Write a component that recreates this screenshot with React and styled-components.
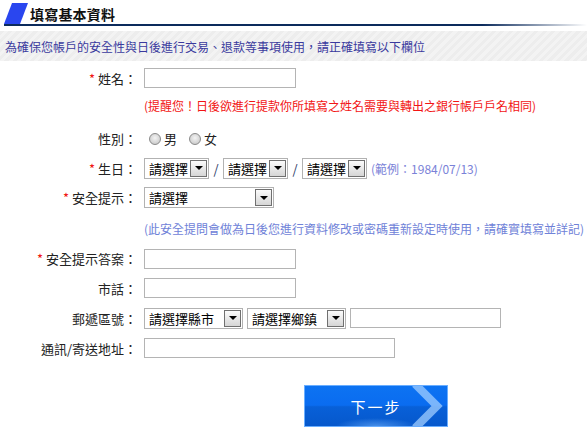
import React from "react";
import styled, { createGlobalStyle } from "styled-components";

const Global = createGlobalStyle`
  html, body { margin: 0; padding: 0; background: #fff; }
  body { font-family: "Noto Sans CJK TC", "Noto Sans", "Liberation Sans", sans-serif; color: #222; }
  * { box-sizing: border-box; }
`;

const Page = styled.div`
  width: 587px;
  height: 438px;
  overflow: hidden;
  background: #fff;
`;

const Header = styled.div`
  display: flex;
  align-items: center;
  height: 24px;
  padding: 3px 0 0 4px;
`;

const Mark = styled.svg`
  width: 24px;
  height: 21px;
  flex: none;
`;

const Title = styled.h1`
  margin: 0 0 0 2px;
  font-size: 14px;
  font-weight: 700;
  line-height: 20px;
  color: #111;
  letter-spacing: 0.2px;
`;

const Rule = styled.div`
  height: 2px;
  margin-left: 4px;
  background: linear-gradient(to right, #0c2b5c 0%, #0c2b5c 82%, #ffffff 100%);
`;

const Intro = styled.div`
  margin-top: 5px;
  height: 30px;
  display: flex;
  align-items: center;
  padding-left: 5px;
  font-size: 12px;
  color: #3a3a9e;
  background: repeating-linear-gradient(135deg, #ededed 0 3px, #f3f3f3 3px 6px);
`;

const Form = styled.div`
  display: flex;
  flex-direction: column;
  padding-top: 2px;
`;

const Row = styled.div`
  display: grid;
  grid-template-columns: 137px auto;
  column-gap: 7px;
  align-items: center;
  height: ${(p) => p.$h || 30}px;
  margin-top: ${(p) => p.$mt || 0}px;
`;

const Label = styled.div`
  text-align: right;
  font-size: 13px;
  color: #222;
  white-space: nowrap;
`;

const Star = styled.span`
  color: #f01010;
  font-size: 13px;
  margin-right: 3px;
`;

const Field = styled.div`
  display: flex;
  align-items: center;
  gap: ${(p) => p.$gap ?? 4}px;
  grid-column: 2;
`;

const TextInput = styled.div`
  width: ${(p) => p.$w}px;
  height: 20px;
  border: 1px solid #b4b4b4;
  background: #fff;
`;

const Select = styled.div`
  width: ${(p) => p.$w}px;
  height: 21px;
  border: 1px solid #b2b2b2;
  background: #fff;
  display: flex;
  align-items: center;
  padding: 1px 1px 1px 4px;
  font-size: 13px;
  color: #000;
`;

const SelText = styled.span`
  flex: 1;
  white-space: nowrap;
  line-height: 17px;
`;

const Arrow = styled.span`
  flex: none;
  width: 17px;
  height: 17px;
  border: 1px solid #707070;
  background: linear-gradient(#fbfbfb, #d6d6d6);
  display: flex;
  align-items: center;
  justify-content: center;
  &::after {
    content: "";
    border-left: 4px solid transparent;
    border-right: 4px solid transparent;
    border-top: 4px solid #000;
  }
`;

const Slash = styled.span`
  width: 6px;
  font-size: 13px;
  color: #2b3a66;
  text-align: center;
`;

const Note = styled.div`
  grid-column: 2;
  font-size: 12px;
  color: ${(p) => p.$color};
  white-space: nowrap;
`;

const Radio = styled.span`
  width: 12px;
  height: 12px;
  border-radius: 50%;
  border: 1px solid #8a8a8a;
  background: radial-gradient(circle at 50% 40%, #f4f4f4 0%, #d0d0d0 70%, #bdbdbd 100%);
  flex: none;
`;

const RadioText = styled.span`
  font-size: 13px;
  margin: 0 ${(p) => p.$mr || 0}px 0 3px;
`;

const ButtonWrap = styled.div`
  margin: 22px 0 0 304px;
`;

const NextButton = styled.button`
  position: relative;
  width: 144px;
  height: 42px;
  padding: 0;
  border: 1px solid #6aaeff;
  background:
    radial-gradient(ellipse 40px 8px at 50% 100%, rgba(120, 185, 255, 0.55), rgba(120, 185, 255, 0) 100%),
    linear-gradient(#0d73f2 0%, #0a6cf0 48%, #0860d8 52%, #0658cc 100%);
  color: #fff;
  font-family: "Noto Sans CJK TC", sans-serif;
  font-size: 15px;
  letter-spacing: 2px;
  overflow: hidden;
  cursor: pointer;
`;

const Chevron = styled.svg`
  position: absolute;
  right: 0;
  top: 0;
  width: 40px;
  height: 40px;
`;

export default function App() {
  return (
    <Page>
      <Global />
      <Header>
        <Mark viewBox="0 0 24 21">
          <polygon points="8,0 24,0 16,21 0,21" fill="#2a46ef" />
        </Mark>
        <Title>填寫基本資料</Title>
      </Header>
      <Rule />
      <Intro>為確保您帳戶的安全性與日後進行交易、退款等事項使用，請正確填寫以下欄位</Intro>
      <Form>
        <Row $h={30}>
          <Label><Star>*</Star>姓名：</Label>
          <Field><TextInput $w={152} /></Field>
        </Row>
        <Row $h={24}>
          <Note $color="#f21414">(提醒您！日後欲進行提款你所填寫之姓名需要與轉出之銀行帳戶戶名相同)</Note>
        </Row>
        <Row $h={29} $mt={7}>
          <Label>性別：</Label>
          <Field $gap={0}>
            <span style={{ width: 5 }} />
            <Radio />
            <RadioText $mr={12}>男</RadioText>
            <Radio />
            <RadioText>女</RadioText>
          </Field>
        </Row>
        <Row $h={30}>
          <Label><Star>*</Star>生日：</Label>
          <Field>
            <Select $w={65}><SelText>請選擇</SelText><Arrow /></Select>
            <Slash>/</Slash>
            <Select $w={65}><SelText>請選擇</SelText><Arrow /></Select>
            <Slash>/</Slash>
            <Select $w={65}><SelText>請選擇</SelText><Arrow /></Select>
            <Note $color="#7a82d8">(範例：1984/07/13)</Note>
          </Field>
        </Row>
        <Row $h={29}>
          <Label><Star>*</Star>安全提示：</Label>
          <Field><Select $w={130}><SelText>請選擇</SelText><Arrow /></Select></Field>
        </Row>
        <Row $h={32}>
          <Note $color="#6f82d8">(此安全提問會做為日後您進行資料修改或密碼重新設定時使用，請確實填寫並詳記)</Note>
        </Row>
        <Row $h={29}>
          <Label><Star>*</Star>安全提示答案：</Label>
          <Field><TextInput $w={152} /></Field>
        </Row>
        <Row $h={30}>
          <Label>市話：</Label>
          <Field><TextInput $w={152} /></Field>
        </Row>
        <Row $h={30}>
          <Label>郵遞區號：</Label>
          <Field>
            <Select $w={99}><SelText>請選擇縣市</SelText><Arrow /></Select>
            <Select $w={99}><SelText>請選擇鄉鎮</SelText><Arrow /></Select>
            <TextInput $w={151} />
          </Field>
        </Row>
        <Row $h={30}>
          <Label>通訊/寄送地址：</Label>
          <Field><TextInput $w={251} /></Field>
        </Row>
      </Form>
      <ButtonWrap>
        <NextButton>
          下一步
          <Chevron viewBox="0 0 40 40">
            <polyline points="8,-2 30,20 8,42" fill="none" stroke="rgba(160,205,255,0.75)" strokeWidth="8" />
          </Chevron>
        </NextButton>
      </ButtonWrap>
    </Page>
  );
}
